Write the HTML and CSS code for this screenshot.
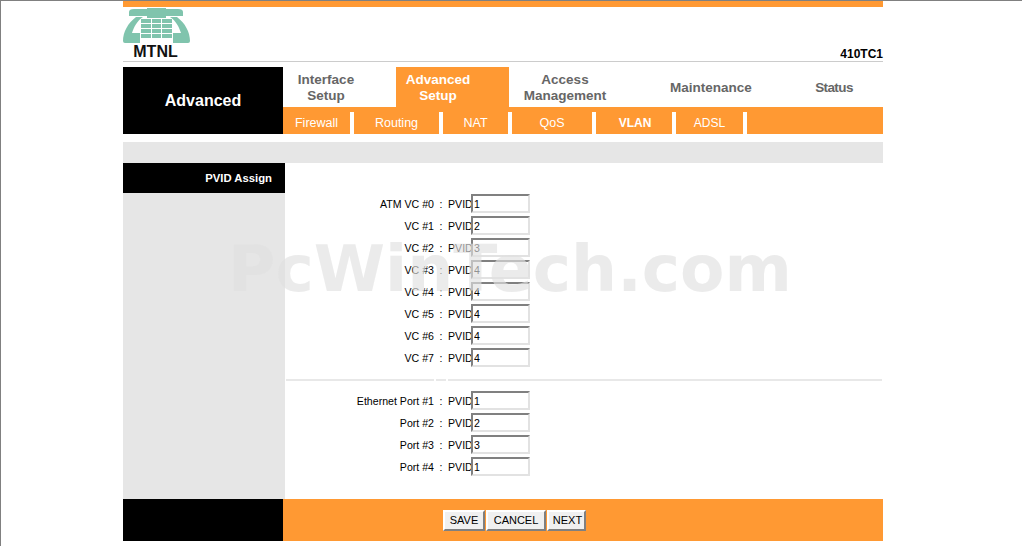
FILE: index.html
```html
<!DOCTYPE html>
<html lang="en">
<head>
<meta charset="utf-8">
<title>Advanced Setup - VLAN</title>
<link rel="stylesheet" href="styles.css">
</head>
<body>
<div class="page">
  <div class="top-strip"></div>
  <header class="brand">
    <div class="logo">
      <svg class="logo-art" width="67" height="36" viewBox="0 0 67 36" aria-hidden="true">
        <path class="phone" d="M6,4 Q6,1 11,1 H24 V0 H43 V1 H55 Q60,1 60,4 V8 H43 V10 H24 V8 H6 Z"/>
        <path class="phone" d="M13,9 H20 C14,13 11,19 9,25 H17 V35 H2 Q0,35 0,33 C0,24 5,15 13,9 Z"/>
        <path class="phone" d="M54,9 H47 C53,13 56,19 58,25 H50 V35 H65 Q67,35 67,33 C67,24 62,15 54,9 Z"/>
        <path class="keys" d="M18,11 H28 V15 H18 Z M29,11 H38 V15 H29 Z M39,11 H49 V15 H39 Z M18,16 H28 V20 H18 Z M29,16 H38 V20 H29 Z M39,16 H49 V20 H39 Z M18,21 H28 V25 H18 Z M29,21 H38 V25 H29 Z M39,21 H49 V25 H39 Z M18,26 H28 V30 H18 Z M29,26 H38 V30 H29 Z M39,26 H49 V30 H39 Z"/>
      </svg>
      <span class="logo-name">MTNL</span>
    </div>
    <span class="model">410TC1</span>
  </header>
  <nav class="menu">
    <div class="section">Advanced</div>
    <div class="menu-main">
      <div class="tabs">
        <a class="tab tab-interface">Interface<br>Setup</a>
        <a class="tab tab-advanced">Advanced<br>Setup</a>
        <a class="tab tab-access">Access<br>Management</a>
        <a class="tab tab-maintenance">Maintenance</a>
        <a class="tab tab-status">Status</a>
      </div>
      <div class="subtabs">
        <a class="sub sub-firewall">Firewall</a>
        <a class="sub sub-routing">Routing</a>
        <a class="sub sub-nat">NAT</a>
        <a class="sub sub-qos">QoS</a>
        <a class="sub sub-vlan">VLAN</a>
        <a class="sub sub-adsl">ADSL</a>
        <span class="sub sub-rest"></span>
      </div>
    </div>
  </nav>
  <div class="band"></div>
  <div class="content">
    <aside class="side"><h2 class="side-title">PVID Assign</h2></aside>
    <main class="form">
      <div class="group group-vc">
        <div class="row"><span class="name">ATM VC #0</span><span class="colon">:</span><label class="pvid">PVID</label><input class="field" value="1"></div>
        <div class="row"><span class="name">VC #1</span><span class="colon">:</span><label class="pvid">PVID</label><input class="field" value="2"></div>
        <div class="row"><span class="name">VC #2</span><span class="colon">:</span><label class="pvid">PVID</label><input class="field" value="3"></div>
        <div class="row"><span class="name">VC #3</span><span class="colon">:</span><label class="pvid">PVID</label><input class="field" value="4"></div>
        <div class="row"><span class="name">VC #4</span><span class="colon">:</span><label class="pvid">PVID</label><input class="field" value="4"></div>
        <div class="row"><span class="name">VC #5</span><span class="colon">:</span><label class="pvid">PVID</label><input class="field" value="4"></div>
        <div class="row"><span class="name">VC #6</span><span class="colon">:</span><label class="pvid">PVID</label><input class="field" value="4"></div>
        <div class="row"><span class="name">VC #7</span><span class="colon">:</span><label class="pvid">PVID</label><input class="field" value="4"></div>
      </div>
      <div class="divider"><i class="rule rule-a"></i><i class="rule rule-b"></i><i class="rule rule-c"></i></div>
      <div class="group">
        <div class="row"><span class="name">Ethernet Port #1</span><span class="colon">:</span><label class="pvid">PVID</label><input class="field" value="1"></div>
        <div class="row"><span class="name">Port #2</span><span class="colon">:</span><label class="pvid">PVID</label><input class="field" value="2"></div>
        <div class="row"><span class="name">Port #3</span><span class="colon">:</span><label class="pvid">PVID</label><input class="field" value="3"></div>
        <div class="row"><span class="name">Port #4</span><span class="colon">:</span><label class="pvid">PVID</label><input class="field" value="1"></div>
      </div>
    </main>
  </div>
  <footer class="foot">
    <div class="foot-side"></div>
    <div class="foot-main">
      <button class="btn btn-save">SAVE</button><button class="btn btn-cancel">CANCEL</button><button class="btn btn-next">NEXT</button>
    </div>
  </footer>
</div>
<div class="watermark">PcWinTech.com</div>
</body>
</html>
```

FILE: styles.css
```css
html, body { margin: 0; padding: 0; }
body {
  position: relative;
  height: 545px;
  overflow: hidden;
  background: #fff;
  border-top: 1px solid #808080;
  border-left: 1px solid #808080;
  font-family: "Liberation Sans", Arial, sans-serif;
}
.page { width: 760px; margin-left: 122px; }
.top-strip { height: 6px; background: #ff9933; }

.brand {
  height: 54px;
  border-bottom: 1px solid #ccc;
  display: flex;
  justify-content: space-between;
  align-items: flex-end;
}
.logo { width: 67px; height: 50px; display: flex; flex-direction: column; align-items: center; margin-bottom: 3px; }
.logo-art { display: block; height: 36px; flex: none; overflow: visible; }
.phone { fill: #80c4ad; }
.keys { fill: #80c4ad; }
.logo-name { font-weight: 700; font-size: 16px; line-height: 14px; color: #111; margin: 1px 2px 0 0; }
.model { font-weight: 700; font-size: 12px; line-height: 14px; color: #000; margin-bottom: 0; }

.menu { margin-top: 5px; display: flex; height: 67px; }
.section {
  width: 160px;
  background: #000;
  color: #fff;
  font-weight: 700;
  font-size: 16px;
  display: flex;
  align-items: center;
  justify-content: center;
}
.menu-main { width: 600px; display: flex; flex-direction: column; }
.tabs { height: 40px; display: flex; }
.tab {
  box-sizing: border-box;
  height: 40px;
  padding-top: 2px;
  display: flex;
  align-items: center;
  justify-content: center;
  text-align: center;
  font-weight: 700;
  font-size: 13.5px;
  line-height: 16px;
  color: #666;
}
.tab-interface { width: 113px; padding-right: 27px; }
.tab-advanced { width: 113px; padding-right: 29px; background: #ff9933; color: #fff; }
.tab-access { width: 112px; }
.tab-maintenance { width: 180px; }
.tab-status { width: 82px; padding-right: 16px; letter-spacing: -.6px; }

.subtabs { height: 27px; background: #ff9933; display: flex; }
.sub {
  box-sizing: border-box;
  height: 22px;
  margin-top: 5px;
  border-right: 4px solid #fff;
  color: #fff;
  font-size: 12.5px;
  line-height: 22px;
  text-align: center;
}
.sub-firewall { width: 71px; }
.sub-routing { width: 89px; }
.sub-nat { width: 69px; }
.sub-qos { width: 84px; }
.sub-vlan { width: 80px; font-weight: 700; font-size: 12px; padding-left: 2px; }
.sub-adsl { width: 71px; font-size: 12px; }
.sub-rest { flex: 1; border-right: 0; }

.band { height: 21px; margin-top: 8px; background: #e6e6e6; }

.content { display: flex; height: 336px; }
.side { width: 162px; background: #e6e6e6; }
.side-title {
  margin: 0;
  height: 30px;
  background: #000;
  color: #fff;
  font-size: 11.3px;
  line-height: 30px;
  font-weight: 700;
  text-align: right;
  padding-right: 13px;
  box-sizing: border-box;
}
.form { width: 598px; padding-top: 31px; box-sizing: border-box; }
.row { height: 22px; display: flex; align-items: flex-start; font-size: 10.6px; color: #000; line-height: 21px; }
.name { width: 149px; text-align: right; }
.colon { width: 14px; text-align: center; }
.pvid { width: 23px; }
.field {
  box-sizing: border-box;
  width: 59px;
  height: 19px;
  margin: 0;
  padding: 1px 1px 0;
  border: 2px solid;
  border-color: #808080 #e2e2e2 #e2e2e2 #808080;
  background: transparent;
  font: 10.6px "Liberation Sans", Arial, sans-serif;
  color: #000;
  border-radius: 0;
  outline: 0;
}
.divider { display: flex; height: 2px; margin: 9px 1px 10px 1px; }
.rule { display: block; height: 2px; background: #e8e8e8; }
.rule-a { width: 148px; }
.rule-b { width: 10px; margin-left: 2px; }
.rule-c { flex: 1; margin-left: 2px; }

.foot { display: flex; height: 42px; }
.foot-side { width: 160px; background: #000; }
.foot-main { flex: 1; background: #ff9933; padding: 11px 0 0 160px; box-sizing: border-box; display: flex; align-items: flex-start; }
.btn {
  box-sizing: border-box;
  height: 21px;
  margin: 0 1px 0 0;
  padding: 0 0 2px;
  border: 2px solid;
  border-color: #fff #808080 #808080 #fff;
  background: #f0f0f0;
  font: 11px "Liberation Sans", Arial, sans-serif;
  color: #000;
  border-radius: 0;
}
.btn-save { width: 42px; }
.btn-cancel { width: 60px; }
.btn-next { width: 39px; margin-right: 0; padding-left: 2px; }

.watermark {
  position: absolute;
  left: 227px;
  top: 228px;
  font-family: "DejaVu Sans", sans-serif;
  font-weight: 700;
  font-size: 64.7px;
  line-height: 80px;
  color: rgba(225, 225, 225, .65);
  white-space: nowrap;
  pointer-events: none;
}
```
